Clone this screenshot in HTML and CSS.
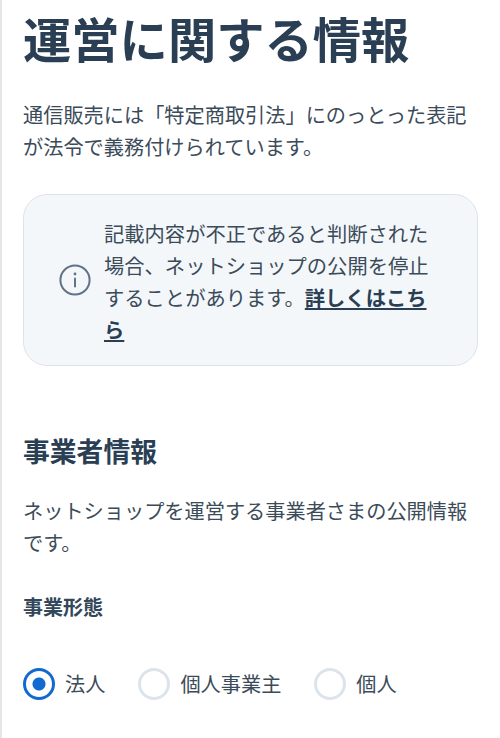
FILE: index.html
```html
<!DOCTYPE html>
<html lang="ja">
<head>
<meta charset="utf-8">
<title>運営に関する情報</title>
<link rel="stylesheet" href="styles.css">
</head>
<body>
<main class="page">
  <h1 class="title">運営に関する情報</h1>
  <p class="text lead">通信販売には「特定商取引法」にのっとった表記が法令で義務付けられています。</p>
  <div class="notice">
    <svg class="notice-icon" viewBox="0 0 32 32" aria-hidden="true">
      <circle cx="16" cy="16" r="14.6" fill="none" stroke="#5f7286" stroke-width="2"/>
      <circle cx="16" cy="10" r="1.4" fill="#5f7286"/>
      <rect x="15" y="13.5" width="2" height="10" rx="1" fill="#5f7286"/>
    </svg>
    <p class="text notice-text">記載内容が不正であると判断された場合、ネットショップの公開を停止することがあります。<a class="notice-link" href="#">詳しくはこちら</a></p>
  </div>
  <h2 class="section-title">事業者情報</h2>
  <p class="text section-lead">ネットショップを運営する事業者さまの公開情報です。</p>
  <h3 class="field-label">事業形態</h3>
  <div class="radios">
    <label class="radio"><span class="radio-mark radio-mark-on"></span>法人</label>
    <label class="radio"><span class="radio-mark"></span>個人事業主</label>
    <label class="radio"><span class="radio-mark"></span>個人</label>
  </div>
</main>
</body>
</html>
```
FILE: styles.css
```css
* { box-sizing: border-box; }
html, body { margin: 0; height: 100%; }
body {
  background: #fff;
  overflow: hidden;
  font-family: "Noto Sans CJK JP", "Noto Sans", sans-serif;
  color: #3b4b59;
}
.page {
  height: 738px;
  padding: 9px 22px 0 21px;
  border-left: 2px solid #e6e6e6;
}
.title {
  margin: 0;
  font-size: 48.3px;
  line-height: 56px;
  font-weight: 700;
  color: #2a3f54;
}
.text {
  margin: 0;
  font-size: 20.2px;
  line-height: 32px;
}
.lead { margin-top: 34px; }
.notice {
  margin-top: 31px;
  height: 172px;
  display: flex;
  align-items: center;
  gap: 13px;
  padding: 2px 34px 0 35px;
  background: #f4f7fa;
  border: 1px solid #dce4ea;
  border-radius: 24px;
}
.notice-icon { flex: none; width: 32px; height: 32px; margin-top: -2px; }
.notice-text { min-width: 0; line-break: strict; font-size: 20.3px; }
.notice-link {
  color: #2a3f54;
  font-weight: 700;
  text-decoration: underline;
}
.section-title {
  margin: 65px 0 0;
  font-size: 26.8px;
  line-height: 40px;
  font-weight: 700;
  color: #2a3f54;
}
.section-lead { margin-top: 24px; }
.field-label {
  margin: 33px 0 0;
  font-size: 20px;
  line-height: 30px;
  font-weight: 700;
  color: #33475a;
}
.radios {
  margin-top: 46px;
  display: flex;
  gap: 33px;
}
.radio {
  display: flex;
  align-items: center;
  gap: 10px;
  font-size: 20.2px;
  line-height: 32px;
}
.radio-mark {
  flex: none;
  width: 32px;
  height: 32px;
  border-radius: 50%;
  border: 3px solid #dbe4ec;
  background: #fff;
}
.radio-mark-on {
  border-color: #1269cf;
  background: radial-gradient(circle, #1269cf 0 6px, #fff 7px);
}
```
